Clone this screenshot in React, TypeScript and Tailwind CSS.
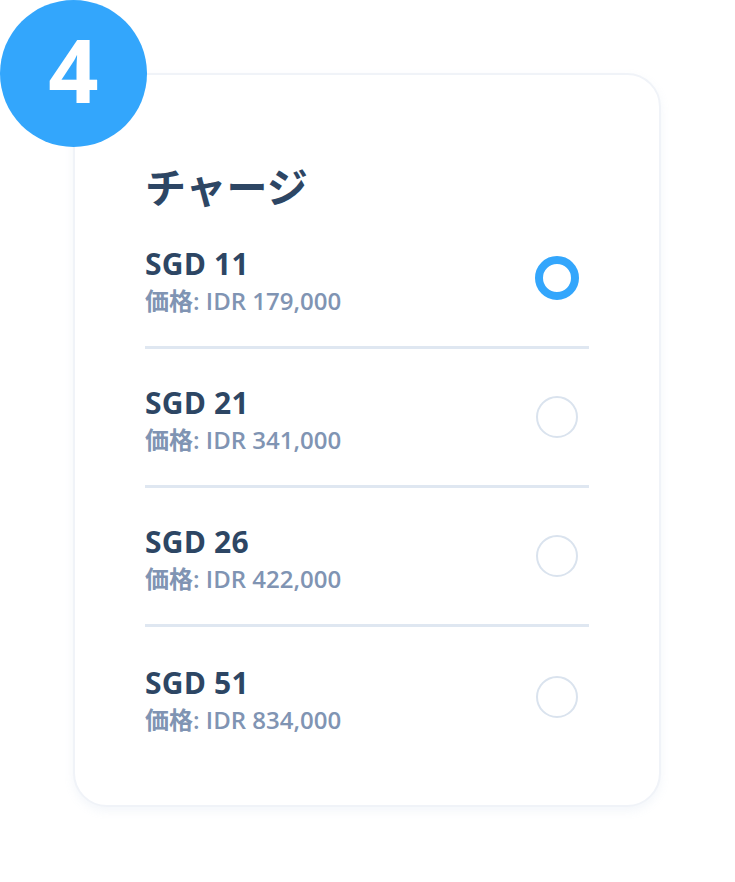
import React, { useState } from "react";

const plans = [
  { amount: "SGD 11", price: "IDR 179,000" },
  { amount: "SGD 21", price: "IDR 341,000" },
  { amount: "SGD 26", price: "IDR 422,000" },
  { amount: "SGD 51", price: "IDR 834,000" },
];

export default function App() {
  const [selected, setSelected] = useState(0);

  return (
    <div
      className="relative w-[735px] h-[882px] bg-white"
      style={{ fontFamily: '"Open Sans", "Noto Sans CJK JP", sans-serif' }}
    >
      {/* Step card */}
      <div className="pt-[73px] pl-[73px]">
        <div className="w-[588px] h-[734px] rounded-[34px] bg-white border-2 border-[#f0f3f8] shadow-[0_4px_10px_rgba(160,180,210,0.12)] pt-[90px] px-[70px]">
          <h2 className="text-[41px] leading-[45px] font-bold text-[#2d4664]">
            チャージ
          </h2>

          <div>
            {plans.map((p, i) => (
              <div
                key={p.amount}
                onClick={() => setSelected(i)}
                className={`h-[139px] flex items-center justify-between cursor-pointer ${
                  i < plans.length - 1 ? "border-b-[3px] border-[#dfe7f1]" : ""
                }`}
              >
                <div className="pt-[6px]">
                  <div className="text-[30px] leading-[36px] font-bold text-[#2d4664] tracking-[0.2px]">
                    {p.amount}
                  </div>
                  <div className="mt-[4px] text-[24px] leading-[30px] font-semibold text-[#8094b3]">
                    価格: {p.price}
                  </div>
                </div>
                {selected === i ? (
                  <span className="w-[44px] h-[44px] rounded-full border-[8px] border-[#33a6fc] mr-[10px]" />
                ) : (
                  <span className="w-[42px] h-[42px] rounded-full border-2 border-[#dae3ee] mr-[11px]" />
                )}
              </div>
            ))}
          </div>
        </div>
      </div>

      {/* Step number badge */}
      <div className="absolute left-0 top-0 w-[147px] h-[147px] rounded-full bg-[#33a6fc] flex items-center justify-center">
        <span className="text-white text-[88px] font-bold leading-none -mt-[10px]">4</span>
      </div>
    </div>
  );
}
